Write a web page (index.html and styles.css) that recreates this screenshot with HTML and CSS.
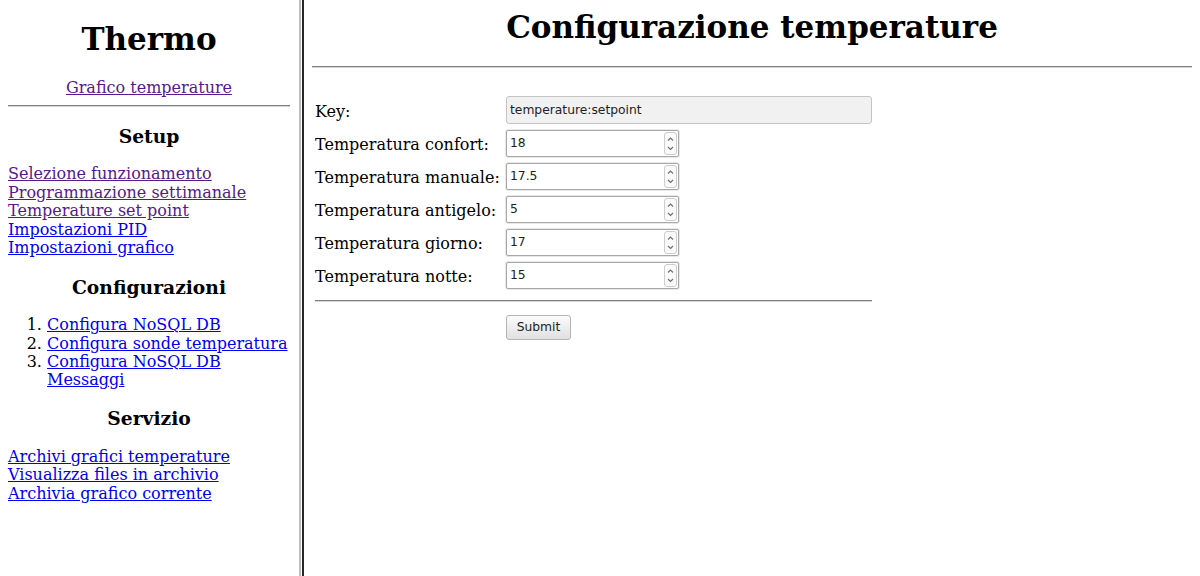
FILE: index.html
```html
<!DOCTYPE html>
<html lang="it">

<head>
    <meta charset="UTF-8">
    <meta name="viewport" content="width=device-width, initial-scale=1.0">
    <title>Thermo - Configurazione temperature</title>
    <link rel="stylesheet" href="styles.css">
</head>

<body>
<div class="frames">
    <div class="menu">
        <h1>Thermo</h1>
        <div class="center"><a class="visited" href="#">Grafico temperature</a></div>
        <hr>
        <h3>Setup</h3>
        <a class="visited" href="#">Selezione funzionamento</a><br>
        <a class="visited" href="#">Programmazione settimanale</a><br>
        <a class="visited" href="#">Temperature set point</a><br>
        <a href="#">Impostazioni PID</a><br>
        <a href="#">Impostazioni grafico</a>
        <h3>Configurazioni</h3>
        <ol>
            <li><a href="#">Configura NoSQL DB</a></li>
            <li><a href="#">Configura sonde temperatura</a></li>
            <li><a href="#">Configura NoSQL DB Messaggi</a></li>
        </ol>
        <h3>Servizio</h3>
        <a href="#">Archivi grafici temperature</a><br>
        <a href="#">Visualizza files in archivio</a><br>
        <a href="#">Archivia grafico corrente</a>
    </div>

    <div class="divider"></div>

    <div class="content">
        <h1>Configurazione temperature</h1>
        <hr>
        <form>
            <table class="config">
                <tr class="key-row">
                    <td class="label">Key:</td>
                    <td><input class="key" type="text" value="temperature:setpoint" readonly></td>
                </tr>
                <tr>
                    <td class="label">Temperatura confort:</td>
                    <td>
                        <span class="number"><input type="text" value="18"><span class="spin"><svg width="11" height="21" viewBox="0 0 11 21"><path d="M3 7.5 L5.5 5 L8 7.5 M3 14 L5.5 16.5 L8 14" /></svg></span></span>
                    </td>
                </tr>
                <tr>
                    <td class="label">Temperatura manuale:</td>
                    <td>
                        <span class="number"><input type="text" value="17.5"><span class="spin"><svg width="11" height="21" viewBox="0 0 11 21"><path d="M3 7.5 L5.5 5 L8 7.5 M3 14 L5.5 16.5 L8 14" /></svg></span></span>
                    </td>
                </tr>
                <tr>
                    <td class="label">Temperatura antigelo:</td>
                    <td>
                        <span class="number"><input type="text" value="5"><span class="spin"><svg width="11" height="21" viewBox="0 0 11 21"><path d="M3 7.5 L5.5 5 L8 7.5 M3 14 L5.5 16.5 L8 14" /></svg></span></span>
                    </td>
                </tr>
                <tr>
                    <td class="label">Temperatura giorno:</td>
                    <td>
                        <span class="number"><input type="text" value="17"><span class="spin"><svg width="11" height="21" viewBox="0 0 11 21"><path d="M3 7.5 L5.5 5 L8 7.5 M3 14 L5.5 16.5 L8 14" /></svg></span></span>
                    </td>
                </tr>
                <tr>
                    <td class="label">Temperatura notte:</td>
                    <td>
                        <span class="number"><input type="text" value="15"><span class="spin"><svg width="11" height="21" viewBox="0 0 11 21"><path d="M3 7.5 L5.5 5 L8 7.5 M3 14 L5.5 16.5 L8 14" /></svg></span></span>
                    </td>
                </tr>
                <tr class="rule-row">
                    <td colspan="2"><hr></td>
                </tr>
                <tr class="submit-row">
                    <td></td>
                    <td><input class="submit" type="button" value="Submit"></td>
                </tr>
            </table>
        </form>
    </div>
</div>
</body>

</html>
```

FILE: styles.css
```css
body,
html {
    margin: 0;
    padding: 0;
}

body {
    font-family: "DejaVu Serif", serif;
    font-size: 16px;
    line-height: 18.5px;
    color: #000;
    background-color: #fff;
}

.frames {
    display: flex;
    height: 100vh;
    overflow: hidden;
}

.menu {
    flex: none;
    width: 282px;
    padding: 0 8px;
}

.divider {
    flex: none;
    width: 1px;
    margin-left: 1px;
    border-left: 2px solid #bdbdbd;
    border-right: 2px solid #262626;
}

.content {
    flex: 1;
    padding: 8px;
}

h1 {
    font-size: 31px;
    line-height: normal;
    margin: .67em 0;
    text-align: center;
}

.menu h1 {
    margin-bottom: 21.8px;
}

.content h1 {
    margin-top: 1px;
}

h3 {
    font-size: 1.17em;
    line-height: normal;
    margin: 17.7px 0 18.7px;
    text-align: center;
}

.center {
    text-align: center;
}

hr {
    height: 0;
    margin: 8px 0;
    border: 0;
    border-top: 1px solid #808080;
    border-bottom: 1px solid #d6d6d6;
}

a {
    color: #0000ee;
}

a.visited {
    color: #551a8b;
}

ol {
    margin: 1em 0;
    padding-left: 39px;
    line-height: 18.3px;
}

/* form */

.config {
    margin-top: 24px;
    border-spacing: 2px;
}

.config td {
    padding: 1px;
    height: 29px;
}

.config .label {
    width: 187px;
    height: 27px;
    padding: 4px 1px 0;
}

.key-row td {
    height: 30px;
}

.key-row .label {
    height: 28px;
}

.rule-row td {
    height: auto;
}

.rule-row hr {
    margin: 6px 0;
}

.submit-row td {
    height: 31px;
}

.key {
    display: block;
    box-sizing: border-box;
    width: 366px;
    height: 28px;
    padding: 0 3px;
    border: 1px solid #c4c4c4;
    border-radius: 3px;
    background-color: #f1f1f1;
    font: 12.3px "DejaVu Sans", sans-serif;
    color: #1e1e1e;
    outline: none;
}

.number {
    display: flex;
    align-items: center;
    box-sizing: border-box;
    width: 173px;
    height: 27px;
    padding: 0 1px 0 3px;
    border: 1px solid #a8a8a8;
    border-radius: 2px;
    box-shadow: 0 0 0 1px #e8e8e8;
    background-color: #fff;
}

.number input {
    flex: 1;
    min-width: 0;
    padding: 0;
    border: 0;
    outline: none;
    background: transparent;
    font: 12.3px "DejaVu Sans", sans-serif;
    color: #1e1e1e;
}

.spin {
    display: flex;
    box-sizing: border-box;
    width: 13px;
    height: 23px;
    border: 1px solid #cdcdcd;
    border-radius: 3px;
    background-color: #fafafa;
}

.spin path {
    fill: none;
    stroke: #707070;
    stroke-width: 1.2;
}

.submit {
    box-sizing: border-box;
    width: 65px;
    height: 25px;
    padding: 0;
    border: 1px solid #b4b4b4;
    border-radius: 3px;
    background: linear-gradient(#fbfbfb, #e0e0e0);
    font: 12.3px "DejaVu Sans", sans-serif;
    color: #1e1e1e;
}
```
